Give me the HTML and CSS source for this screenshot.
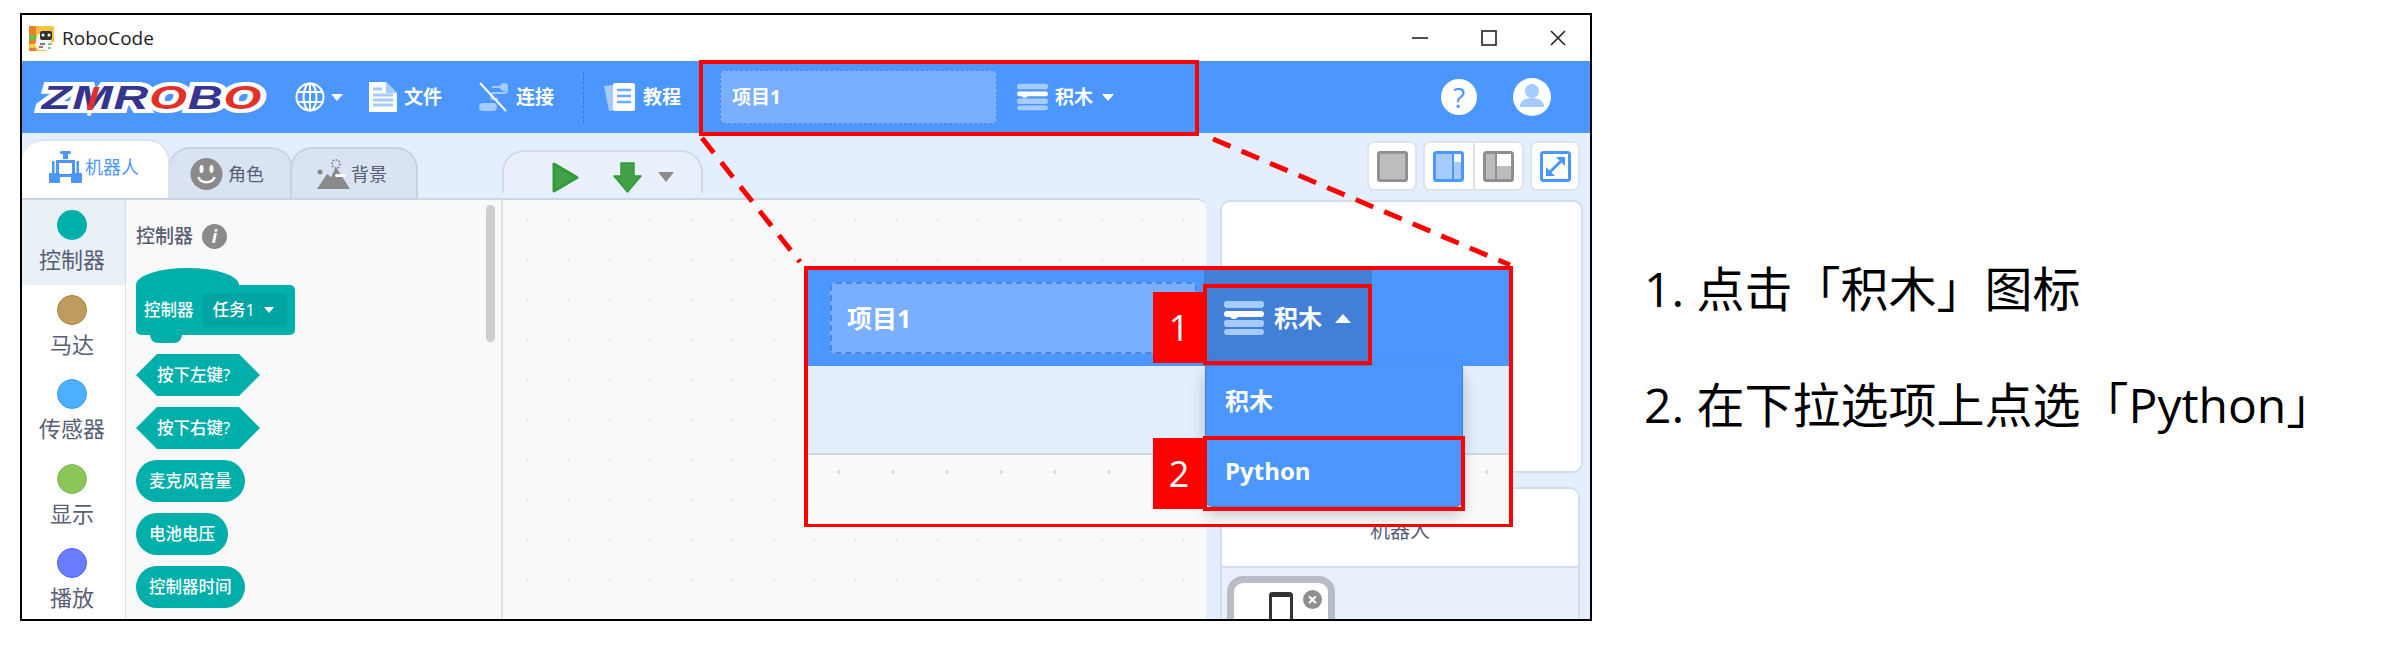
FILE: index.html
```html
<!DOCTYPE html>
<html lang="zh-CN">
<head>
    <meta charset="UTF-8">
    <title>RoboCode</title>
    <link rel="stylesheet" href="styles.css">
</head>
<body>
    <svg class="defs" width="0" height="0">
        <symbol id="icon-blocks" viewBox="0 0 40 36">
            <rect x="0" y="1" width="40" height="7" rx="3" fill="#a6cbff"/>
            <rect x="0" y="11" width="40" height="6" rx="3" fill="#fff"/>
            <circle cx="10" cy="15" r="4" fill="#fff"/>
            <rect x="0" y="20" width="40" height="7" rx="3" fill="#a6cbff"/>
            <rect x="0" y="29" width="40" height="6" rx="3" fill="#a6cbff"/>
        </symbol>
    </svg>

    <div class="page">
        <div class="window">
            <div class="titlebar">
                <svg class="app-icon" viewBox="0 0 25 25">
                    <rect width="25" height="25" rx="2" fill="#f6c244"/>
                    <rect width="7" height="25" fill="#ee7f22"/>
                    <rect x="0" y="9" width="7" height="5" fill="#6fc04a"/>
                    <rect x="0" y="18" width="7" height="4" fill="#f4d03f"/>
                    <rect x="17" y="16" width="8" height="9" fill="#fff"/>
                    <path d="M9 8h13v9l-4 7H9l-3-5z" fill="#f4f4f4"/>
                    <rect x="11" y="5" width="12" height="9" rx="2" fill="#333"/>
                    <circle cx="14" cy="9" r="1.5" fill="#fff"/>
                    <circle cx="20" cy="9" r="1.5" fill="#fff"/>
                    <path d="M11 18h5M10 21h4" stroke="#555" stroke-width="1.5"/>
                    <path d="M19 18h4M19 22h3" stroke="#5cb85c" stroke-width="1.5"/>
                </svg>
                <span class="app-name">RoboCode</span>
                <div class="win-controls">
                    <svg viewBox="0 0 16 16"><path d="M0 8h16" stroke="#222" stroke-width="1.6"/></svg>
                    <svg viewBox="0 0 16 16"><rect x="1" y="1" width="14" height="14" fill="none" stroke="#222" stroke-width="1.6"/></svg>
                    <svg viewBox="0 0 16 16"><path d="M1 1l14 14M15 1L1 15" stroke="#222" stroke-width="1.6"/></svg>
                </div>
            </div>

            <div class="header">
                <div class="logo">
                    <span class="logo-text"><span class="lg-blue">Z</span><span class="lg-blue lg-m">M</span><span class="lg-blue">R</span><span class="lg-red">O</span><span class="lg-blue">B</span><span class="lg-red">O</span></span>
                </div>

                <div class="hd-item lang">
                    <svg class="ic-globe" viewBox="0 0 30 30" fill="none" stroke="#fff" stroke-width="2">
                        <circle cx="15" cy="15" r="13.5"/>
                        <ellipse cx="15" cy="15" rx="6.5" ry="13.5"/>
                        <path d="M15 1.5v27M2 10h26M2 20h26"/>
                    </svg>
                    <span class="caret"></span>
                </div>

                <div class="hd-item file">
                    <svg class="ic-file" viewBox="0 0 28 30">
                        <path d="M0 0h17l11 11v19H0z" fill="#fff"/>
                        <path d="M17 0l11 11H17z" fill="#a6cbff"/>
                        <path d="M4 7h9M4 13h20M4 18h20M4 23h20" stroke="#a6cbff" stroke-width="3"/>
                    </svg>
                    <span>文件</span>
                </div>

                <div class="hd-item connect">
                    <svg class="ic-connect" viewBox="0 0 30 30">
                        <path d="M14 5h12a3 3 0 0 1 0 6H16a3 3 0 0 0 0 6h4" stroke="#a6cbff" stroke-width="2" fill="none"/>
                        <circle cx="26" cy="5" r="4" fill="#a6cbff"/>
                        <rect x="1" y="21" width="18" height="8" rx="4" fill="#a6cbff"/>
                        <path d="M2 1l26 28" stroke="#fff" stroke-width="2"/>
                    </svg>
                    <span>连接</span>
                </div>

                <div class="hd-divider"></div>

                <div class="hd-item tutorial">
                    <svg class="ic-tutorial" viewBox="0 0 31 28">
                        <path d="M0 3l20-2 2 24-17 3z" fill="#a6cbff"/>
                        <rect x="9" y="0" width="22" height="28" rx="2" fill="#fff"/>
                        <path d="M13 7h14M13 13h14M13 19h14" stroke="#6ea9ff" stroke-width="2.5"/>
                    </svg>
                    <span>教程</span>
                </div>

                <div class="project-name">项目1</div>

                <div class="hd-item mode">
                    <svg class="ic-blocks"><use href="#icon-blocks"/></svg>
                    <span>积木</span>
                    <span class="caret"></span>
                </div>

                <div class="hd-right">
                    <div class="round-btn help">?</div>
                    <div class="round-btn user">
                        <svg viewBox="0 0 38 38">
                            <circle cx="19" cy="13" r="7" fill="#a6cbff"/>
                            <path d="M7 29c0-7 6-9 12-9s12 2 12 9z" fill="#a6cbff"/>
                        </svg>
                    </div>
                </div>
            </div>

            <div class="main">
                <div class="left-col">
                    <div class="tab-row">
                        <div class="tab active">
                            <svg class="tab-icon" viewBox="0 0 33 32" fill="#4c97ff">
                                <rect x="11" y="0" width="11" height="3" rx="1.5"/>
                                <rect x="14" y="3" width="5" height="5"/>
                                <path d="M7 9h19v3H10v10H7zM23 12h3v10h-3z"/>
                                <rect x="3" y="10" width="2.5" height="12"/>
                                <rect x="27.5" y="10" width="2.5" height="12"/>
                                <rect x="0" y="22" width="11" height="10" rx="1"/>
                                <rect x="22" y="22" width="11" height="10" rx="1"/>
                                <rect x="11" y="23" width="11" height="3"/>
                            </svg>
                            <span>机器人</span>
                        </div>
                        <div class="tab second">
                            <svg class="tab-icon" viewBox="0 0 32 32">
                                <circle cx="16" cy="16" r="16" fill="#8a8a8a"/>
                                <ellipse cx="11" cy="11" rx="2" ry="4" fill="#fff"/>
                                <ellipse cx="21" cy="11" rx="2" ry="4" fill="#fff"/>
                                <path d="M8 19c2 7 14 7 16 0" stroke="#fff" stroke-width="2.5" fill="none"/>
                            </svg>
                            <span>角色</span>
                        </div>
                        <div class="tab third">
                            <svg class="tab-icon" viewBox="0 0 33 30">
                                <path d="M0 30L10 15l4 3 5-10 14 22z" fill="#8a8a8a"/>
                                <circle cx="3" cy="13" r="2.5" fill="#8a8a8a"/>
                                <circle cx="19" cy="5" r="4" fill="none" stroke="#8a8a8a" stroke-dasharray="1.5 1.5" stroke-width="2"/>
                                <rect x="18" y="15" width="11" height="3" rx="1.5" fill="#fff"/>
                            </svg>
                            <span>背景</span>
                        </div>
                        <div class="run-tab">
                            <svg class="ic-run" viewBox="0 0 27 31"><path d="M2 2l23 13.5L2 29z" fill="#43a047" stroke="#2f9c3a" stroke-width="3" stroke-linejoin="round"/></svg>
                            <svg class="ic-download" viewBox="0 0 29 31"><path d="M8 1h13v13h7L14.500 30 1 14h7z" fill="#43a047" stroke="#2f9c3a" stroke-width="1.500" stroke-linejoin="round"/></svg>
                            <span class="caret grey"></span>
                        </div>
                    </div>

                    <div class="editor">
                        <div class="categories">
                            <div class="cat selected"><i class="dot teal"></i><span>控制器</span></div>
                            <div class="cat"><i class="dot brown"></i><span>马达</span></div>
                            <div class="cat"><i class="dot sky"></i><span>传感器</span></div>
                            <div class="cat"><i class="dot green"></i><span>显示</span></div>
                            <div class="cat"><i class="dot violet"></i><span>播放</span></div>
                        </div>

                        <div class="palette">
                            <div class="palette-title">
                                <span>控制器</span>
                                <i class="info">i</i>
                            </div>
                            <div class="block hat">
                                <span>控制器</span>
                                <div class="block-select"><span>任务1</span><span class="caret small"></span></div>
                            </div>
                            <div class="block hex">按下左键?</div>
                            <div class="block hex">按下右键?</div>
                            <div class="block pill">麦克风音量</div>
                            <div class="block pill">电池电压</div>
                            <div class="block pill">控制器时间</div>
                            <div class="scrollbar"></div>
                        </div>

                        <div class="workspace"></div>
                    </div>
                </div>

                <div class="right-col">
                    <div class="stage-tools">
                        <div class="tool-group">
                            <svg viewBox="0 0 33 33"><rect x="1.500" y="1.500" width="30" height="30" rx="2" fill="#bdbdbd" stroke="#8f8f8f" stroke-width="3"/></svg>
                        </div>
                        <div class="tool-group double">
                            <div class="tool-half">
                                <svg viewBox="0 0 31 31">
                                    <rect x="1.500" y="1.500" width="28" height="28" rx="2" fill="#a6cbff" stroke="#4c97ff" stroke-width="3"/>
                                    <path d="M20 1.500v28" stroke="#4c97ff" stroke-width="2"/>
                                    <rect x="21" y="3" width="7" height="8" fill="#fff"/>
                                </svg>
                            </div>
                            <div class="tool-half">
                                <svg viewBox="0 0 31 31">
                                    <rect x="1.500" y="1.500" width="28" height="28" rx="2" fill="#bdbdbd" stroke="#8f8f8f" stroke-width="3"/>
                                    <path d="M13 1.500v28" stroke="#8f8f8f" stroke-width="2"/>
                                    <rect x="14" y="3" width="14" height="12" fill="#fff"/>
                                </svg>
                            </div>
                        </div>
                        <div class="tool-group">
                            <svg viewBox="0 0 31 31" fill="none" stroke="#4c97ff">
                                <rect x="1.500" y="1.500" width="28" height="28" rx="2" fill="#fff" stroke-width="3"/>
                                <path d="M9 22L22 9" stroke-width="3"/>
                                <path d="M16 6h9v9zM15 25H6v-9z" fill="#4c97ff" stroke="none"/>
                            </svg>
                        </div>
                    </div>

                    <div class="stage-card"></div>

                    <div class="sprite-card">
                        <div class="sprite-label">机器人</div>
                        <div class="sprite-list">
                            <div class="sprite-tile">
                                <svg class="ic-phone" viewBox="0 0 24 40">
                                    <rect x="1.500" y="1.500" width="21" height="37" rx="2" fill="#fff" stroke="#333" stroke-width="3"/>
                                    <rect x="2" y="2" width="20" height="3" fill="#333"/>
                                </svg>
                                <span class="sprite-close">×</span>
                            </div>
                        </div>
                    </div>
                </div>
            </div>
        </div>

        <div class="steps">
            <p>1. 点击「积木」图标</p>
            <p>2. 在下拉选项上点选「Python」</p>
        </div>

        <!-- annotation overlays -->
        <div class="mark top-mark"></div>

        <svg class="connectors" width="1600" height="660">
            <path d="M702 138L800 262M1213 139L1510 265" stroke="#f00" stroke-width="5" stroke-dasharray="19 12" fill="none"/>
        </svg>

        <div class="callout">
            <div class="co-band">
                <div class="co-input">项目1</div>
                <div class="co-mode">
                    <svg class="co-blocks"><use href="#icon-blocks"/></svg>
                    <span>积木</span>
                    <span class="caret up"></span>
                </div>
            </div>
            <div class="co-light"></div>
            <div class="co-work"></div>

            <div class="co-menu">
                <div class="co-option">积木</div>
                <div class="co-option">Python</div>
            </div>

            <div class="mark co-mark-1"></div>
            <div class="mark co-mark-2"></div>
            <div class="num num-1">1</div>
            <div class="num num-2">2</div>
        </div>
    </div>
</body>
</html>
```

FILE: styles.css
```css
* {
    margin: 0;
    padding: 0;
    box-sizing: border-box;
}

body {
    background: #fff;
    font-family: "Open Sans", "Noto Sans CJK SC", sans-serif;
    color: #575e75;
    overflow: hidden;
}

.defs {
    position: absolute;
}

.page {
    position: relative;
    display: flex;
    align-items: flex-start;
    width: 2398px;
    height: 660px;
    padding: 13px 0 0 20px;
}

/* App window */
.window {
    display: flex;
    flex-direction: column;
    width: 1572px;
    height: 608px;
    border: 2px solid #000;
    overflow: hidden;
    flex-shrink: 0;
}

.titlebar {
    display: flex;
    align-items: center;
    height: 46px;
    padding: 0 24px 0 7px;
    background: #fff;
    flex-shrink: 0;
}

.app-icon {
    width: 25px;
    height: 25px;
}

.app-name {
    margin-left: 8px;
    font-size: 19px;
    line-height: 1.4;
    color: #222;
}

.win-controls {
    display: flex;
    gap: 53px;
    margin-left: auto;
}

.win-controls svg {
    width: 16px;
    height: 16px;
}

/* Blue top bar */
.header {
    display: flex;
    align-items: center;
    height: 72px;
    padding-left: 14px;
    background: #4c97ff;
    color: #fff;
    font-size: 19px;
    font-weight: 700;
    line-height: 1;
    flex-shrink: 0;
}

.logo {
    width: 224px;
    height: 40px;
    flex-shrink: 0;
}

.logo-text {
    display: inline-block;
    padding-left: 4px;
    font-family: "Liberation Sans", sans-serif;
    font-size: 34px;
    font-style: italic;
    line-height: 40px;
    letter-spacing: 0.5px;
    white-space: nowrap;
    -webkit-text-stroke: 8px #fff;
    paint-order: stroke fill;
    transform: scaleX(1.43);
    transform-origin: left center;
}

.lg-blue {
    color: #35358f;
}

.lg-red {
    color: #e5302a;
}

/* red stem in the middle of the M */
.lg-m {
    position: relative;
    display: inline-block;
}

.lg-m::after {
    content: '';
    position: absolute;
    left: 13px;
    top: 10px;
    width: 4px;
    height: 23px;
    background: #e5302a;
    transform: skewX(-12deg);
}

.hd-item {
    display: flex;
    align-items: center;
    gap: 7px;
    flex-shrink: 0;
}

.caret {
    width: 0;
    height: 0;
    border-left: 6.5px solid transparent;
    border-right: 6.5px solid transparent;
    border-top: 7px solid #fff;
}

.caret.up {
    border-top: 0;
    border-left-width: 8px;
    border-right-width: 8px;
    border-bottom: 9px solid #fff;
}

.caret.grey {
    border-left-width: 8px;
    border-right-width: 8px;
    border-top: 10px solid #8c8c8c;
}

.caret.small {
    border-left-width: 5px;
    border-right-width: 5px;
    border-top-width: 6px;
}

.lang {
    margin-left: 35px;
    gap: 6px;
}

.ic-globe {
    width: 30px;
    height: 30px;
}

.file {
    margin-left: 26px;
}

.ic-file {
    width: 28px;
    height: 30px;
}

.connect {
    margin-left: 36px;
    gap: 8px;
}

.ic-connect {
    width: 30px;
    height: 30px;
}

.hd-divider {
    width: 0;
    height: 51px;
    margin-left: 29px;
    border-left: 1px dashed #3c78cc;
}

.tutorial {
    margin-left: 20px;
    gap: 8px;
}

.ic-tutorial {
    width: 31px;
    height: 28px;
}

.project-name {
    display: flex;
    align-items: center;
    width: 277px;
    height: 54px;
    margin-left: 39px;
    padding-left: 11px;
    background: #7aafff;
    border: 1px dashed #4c86dc;
    border-radius: 5px;
}

.mode {
    margin-left: 20px;
}

.mode .caret {
    margin-left: 2px;
}

.ic-blocks {
    width: 31px;
    height: 28px;
}

.hd-right {
    display: flex;
    align-items: center;
    gap: 36px;
    margin-left: auto;
    padding-right: 39px;
}

.round-btn {
    display: flex;
    align-items: center;
    justify-content: center;
    background: #fff;
    border-radius: 50%;
}

.help {
    width: 36px;
    height: 36px;
    color: #4c97ff;
    font-size: 28px;
    font-weight: 400;
}

.user {
    width: 38px;
    height: 38px;
}

.user svg {
    width: 38px;
    height: 38px;
}

/* Editor area */
.main {
    display: flex;
    flex: 1;
    min-height: 0;
    background: #e3effe;
}

.left-col {
    display: flex;
    flex-direction: column;
    width: 1184px;
    flex-shrink: 0;
}

.tab-row {
    display: flex;
    align-items: flex-end;
    height: 65px;
    flex-shrink: 0;
}

.tab {
    display: flex;
    align-items: center;
    font-size: 18px;
    line-height: 1;
    border: 2px solid #c8d2e0;
    border-bottom: 0;
    border-radius: 22px 22px 0 0;
    background: #d9e3f2;
}

.tab.active {
    z-index: 1;
    width: 148px;
    height: 59px;
    padding: 0 0 6px 27px;
    background: #fff;
    border-color: #dfe3ea;
    border-left: 0;
    color: #4c97ff;
}

.tab.second {
    width: 125px;
    height: 51px;
    margin-left: -2px;
    padding-left: 20px;
}

.tab.third {
    width: 128px;
    height: 51px;
    margin-left: -3px;
    padding-left: 25px;
}

.tab span {
    margin-left: 3px;
}

.tab.second span {
    margin-left: 5px;
}

.tab.third span {
    margin-left: 1px;
}

.tab-icon {
    width: 33px;
    height: 32px;
}

.run-tab {
    display: flex;
    align-items: flex-end;
    width: 201px;
    height: 43px;
    margin: 0 0 5px 84px;
    padding-left: 48px;
    background: #e9f0fb;
    border: 2px solid #d4dae4;
    border-bottom: 0;
    border-radius: 22px 22px 0 0;
}

.ic-run {
    width: 27px;
    height: 31px;
}

.ic-download {
    width: 29px;
    height: 31px;
    margin-left: 34px;
}

.run-tab .caret {
    margin: 0 0 11px 16px;
}

.editor {
    display: flex;
    flex: 1;
    min-height: 0;
    border-top: 2px solid #cdd6e3;
    border-top-right-radius: 10px;
    overflow: hidden;
}

.categories {
    width: 104px;
    padding-right: 3px;
    background: #fff;
    border-right: 1px solid #dcdfe5;
    flex-shrink: 0;
}

.cat {
    display: flex;
    flex-direction: column;
    align-items: center;
    height: 84.5px;
    padding-top: 10px;
    font-size: 22px;
    line-height: 1;
}

.cat span {
    margin-top: 8px;
}

.cat.selected {
    margin-right: -3px;
    padding-right: 3px;
    background: #e9f0f6;
}

.dot {
    width: 30px;
    height: 30px;
    border-radius: 50%;
    border: 1px solid transparent;
}

.teal { background: #00aeaa; }
.brown { background: #bf9b5f; border-color: #a97f3c; }
.sky { background: #4cb0ff; border-color: #3a9cf0; }
.green { background: #8cc65a; border-color: #7fbb50; }
.violet { background: #6a7cff; border-color: #4f63ee; }

.palette {
    position: relative;
    display: flex;
    flex-direction: column;
    align-items: flex-start;
    width: 377px;
    padding: 21px 0 0 10px;
    background: #f9f9f9;
    border-right: 2px solid #dfe3ea;
    flex-shrink: 0;
}

.palette-title {
    display: flex;
    align-items: center;
    gap: 9px;
    height: 30px;
    font-size: 19px;
    font-weight: 500;
    line-height: 1;
}

.info {
    display: flex;
    align-items: center;
    justify-content: center;
    width: 25px;
    height: 25px;
    border-radius: 50%;
    background: #8a8a8a;
    color: #fff;
    font-size: 18px;
    font-weight: 700;
}

.block {
    display: flex;
    align-items: center;
    height: 42px;
    margin-bottom: 11px;
    background: #00aeaa;
    color: #fff;
    font-size: 16.500px;
    font-weight: 500;
    line-height: 1;
}

.hat {
    position: relative;
    width: 159px;
    height: 50px;
    margin: 34px 0 19px;
    padding-left: 8px;
    border-radius: 0 5px 5px 5px;
}

.hat::before {
    content: '';
    position: absolute;
    left: 0;
    top: -17px;
    width: 103px;
    height: 34px;
    background: #00aeaa;
    border-radius: 50%;
}

.hat::after {
    content: '';
    position: absolute;
    left: 14px;
    bottom: -8px;
    width: 32px;
    height: 8px;
    background: #00aeaa;
    border-radius: 0 0 8px 8px;
}

.hat span {
    position: relative;
}

.block-select {
    position: relative;
    z-index: 1;
    display: flex;
    align-items: center;
    gap: 9px;
    width: 85px;
    height: 33px;
    margin-left: 8px;
    padding-left: 11px;
    background: #00a5a1;
    border-radius: 5px;
}

.hex {
    width: 124px;
    padding-left: 21px;
    clip-path: polygon(21px 0, calc(100% - 21px) 0, 100% 50%, calc(100% - 21px) 100%, 21px 100%, 0 50%);
}

.pill {
    padding: 0 13px;
    border-radius: 21px;
}

.scrollbar {
    position: absolute;
    top: 5px;
    right: 6px;
    width: 9px;
    height: 137px;
    background: #cdcdcd;
    border-radius: 5px;
}

.workspace {
    flex: 1;
    background-color: #f9f9f9;
    background-image: radial-gradient(circle, #e6e6e6 1px, transparent 1.500px);
    background-size: 41px 40px;
    background-position: 4px 0;
}

.right-col {
    display: flex;
    flex-direction: column;
    flex: 1;
    padding-left: 14px;
}

.stage-tools {
    display: flex;
    gap: 6px;
    height: 67px;
    padding: 8px 0 0 147px;
    flex-shrink: 0;
}

.tool-group {
    display: flex;
    align-items: center;
    justify-content: center;
    width: 50px;
    height: 50px;
    background: #fff;
    border: 2px solid #e0e4ea;
    border-radius: 7px;
}

.tool-group svg {
    width: 31px;
    height: 31px;
}

.tool-group.double {
    width: 101px;
}

.tool-half {
    display: flex;
    align-items: center;
    justify-content: center;
    flex: 1;
    height: 100%;
}

.tool-half + .tool-half {
    border-left: 2px solid #e0e4ea;
}

.stage-card {
    width: 363px;
    height: 273px;
    background: #fff;
    border: 2px solid #d5dde8;
    border-radius: 10px;
    flex-shrink: 0;
}

.sprite-card {
    display: flex;
    flex-direction: column;
    flex: 1;
    width: 360px;
    margin-top: 14px;
    background: #fff;
    border: 2px solid #d5dde8;
    border-bottom: 0;
    border-radius: 10px 10px 0 0;
    overflow: hidden;
}

.sprite-label {
    display: flex;
    align-items: center;
    justify-content: center;
    height: 79px;
    padding-top: 6px;
    font-size: 20px;
    line-height: 1;
    border-bottom: 2px solid #d5dde8;
    flex-shrink: 0;
}

.sprite-list {
    flex: 1;
    padding: 8px 0 0 5px;
    background: #e9f0fb;
}

.sprite-tile {
    position: relative;
    display: flex;
    justify-content: center;
    width: 108px;
    height: 100px;
    padding-top: 9px;
    background: #fff;
    border: 7px solid #b8bcc4;
    border-radius: 16px;
}

.ic-phone {
    width: 24px;
    height: 40px;
}

.sprite-close {
    position: absolute;
    top: 7px;
    right: 6px;
    width: 19px;
    height: 19px;
    border-radius: 50%;
    background: #8f8f8f;
    color: #fff;
    font-size: 18px;
    font-weight: 700;
    line-height: 18px;
    text-align: center;
}

/* Right hand instructions */
.steps {
    display: flex;
    flex-direction: column;
    gap: 48px;
    margin: 242px 0 0 52px;
    color: #000;
    font-size: 48px;
    line-height: 68px;
    white-space: nowrap;
}

/* Annotations over the screenshot */
.mark {
    position: absolute;
    border: 4px solid #f00;
}

.top-mark {
    left: 699px;
    top: 60px;
    width: 500px;
    height: 76px;
}

.connectors {
    position: absolute;
    left: 0;
    top: 0;
}

.callout {
    position: absolute;
    left: 804px;
    top: 266px;
    display: flex;
    flex-direction: column;
    width: 709px;
    height: 261px;
    border: 4px solid #f00;
    border-bottom-width: 3px;
    color: #fff;
    font-size: 24px;
    font-weight: 700;
    line-height: 1;
}

.co-band {
    display: flex;
    align-items: center;
    height: 96px;
    padding-left: 22px;
    background: #4c97ff;
    flex-shrink: 0;
}

.co-input {
    display: flex;
    align-items: center;
    width: 367px;
    height: 72px;
    padding-left: 15px;
    background: #7aafff;
    border: 2px dashed #4c86dc;
    border-radius: 6px;
    font-size: 25px;
}

.co-mode {
    display: flex;
    align-items: center;
    align-self: stretch;
    width: 168px;
    margin-left: 7px;
    padding: 0 0 0 20px;
    background: #4280d7;
}

.co-mode span:first-of-type {
    margin-left: 10px;
}

.co-mode .caret {
    margin-left: 13px;
}

.co-blocks {
    width: 40px;
    height: 36px;
}

.co-light {
    height: 89px;
    background: #e3effe;
    border-bottom: 2px solid #cdd6e3;
    flex-shrink: 0;
}

.co-work {
    flex: 1;
    background-color: #fafafa;
    background-image: radial-gradient(circle, #e0e0e0 1.500px, transparent 2px);
    background-size: 54px 54px;
    background-position: 4px -10px;
}

.co-menu {
    position: absolute;
    left: 397px;
    top: 96px;
    width: 258px;
    height: 141px;
    background: #4c97ff;
    border: 1px solid #4280d7;
    border-top: 0;
    border-radius: 0 0 8px 8px;
    box-shadow: 0 8px 16px rgba(0, 0, 0, 0.22);
}

.co-option {
    display: flex;
    align-items: center;
    height: 70px;
    padding-left: 19px;
}

.co-mark-1 {
    left: 395px;
    top: 14px;
    width: 169px;
    height: 81px;
}

.co-mark-2 {
    left: 395px;
    top: 166px;
    width: 262px;
    height: 75px;
}

.num {
    position: absolute;
    left: 345px;
    display: flex;
    align-items: center;
    justify-content: center;
    width: 52px;
    height: 71px;
    background: #f00;
    color: #fff;
    font-size: 36px;
    font-weight: 400;
}

.num-1 {
    top: 22px;
}

.num-2 {
    top: 168px;
}
```
